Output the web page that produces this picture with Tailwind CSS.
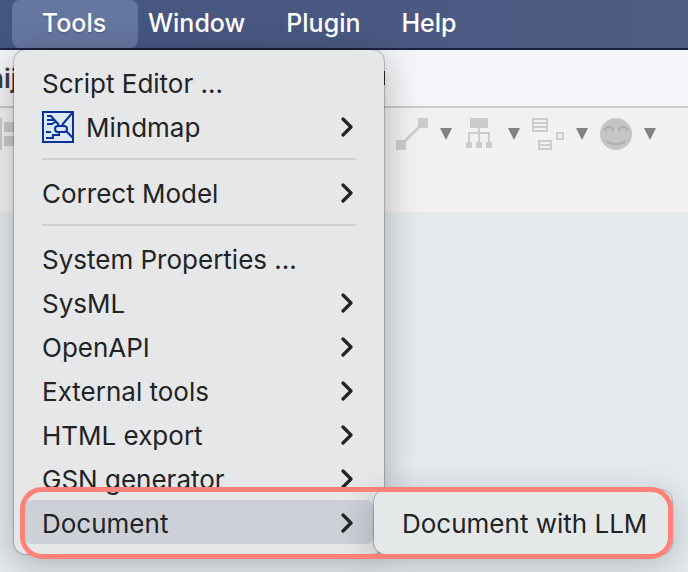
<!DOCTYPE html>
<html lang="en">
<head>
<meta charset="utf-8">
<title>Tools menu</title>
<script src="https://cdn.jsdelivr.net/npm/@tailwindcss/browser@4"></script>
</head>
<body class="relative flex min-h-screen flex-col overflow-hidden bg-[#e5eaee] font-['Inter','Liberation_Sans',sans-serif] text-[26px] text-[#222325]">
<svg class="hidden">
  <symbol id="chevron" viewBox="0 0 12 20"><path d="M2 2l8 8-8 8" fill="none" stroke="#222325" stroke-width="3.2" stroke-linecap="round" stroke-linejoin="round"/></symbol>
  <symbol id="drop" viewBox="0 0 12 12"><path d="M0 0h12L6 12z" fill="#7f8281"/></symbol>
</svg>

<nav aria-label="Menu bar" class="flex h-[50px] items-start border-b-2 border-[#1c2340] bg-linear-to-r from-[#445580] to-[#4e5c82] pl-3 text-[25px] font-medium text-white">
  <button class="h-12 w-[126px] rounded-lg bg-[#65769f] pr-0.5 text-shadow-sm">Tools</button>
  <div class="ml-2.5 flex h-12 gap-[41px] text-shadow-sm">
    <button>Window</button>
    <button>Plugin</button>
    <button>Help</button>
  </div>
</nav>

<header class="flex h-[58px] items-center justify-between overflow-hidden border-b-2 border-[#c8cacc] bg-[#f4f5f8]">
  <span class="-ml-3 font-semibold text-[#3c3c3c]">nij</span>
  <span class="mr-[303px] h-3.5 w-1 bg-[#333]"></span>
</header>

<div role="toolbar" aria-label="Diagram tools" class="flex h-[104px] items-start justify-between bg-[#f1f1f1] pt-2.5 pr-8">
  <button aria-label="Align"><svg class="h-8 w-4" viewBox="0 0 16 32" fill="#c9cccb"><path d="M0 0h2v32H0zM4 4h12v10H4zM4 18h12v10H4z"/></svg></button>
  <div class="flex gap-3">
    <button class="flex items-center gap-3" aria-label="Line">
      <svg class="size-8" viewBox="0 0 32 32" fill="#cacdcc"><path d="M5 27L27 5" stroke="#cacdcc" stroke-width="2.5"/><path d="M22 0h10v10H22zM0 22h10v10H0z"/></svg>
      <svg class="size-3"><use href="#drop"/></svg>
    </button>
    <button class="flex items-center gap-3" aria-label="Hierarchy">
      <svg class="size-8" viewBox="0 0 32 32" fill="#cacdcc"><path d="M6 0h18v10H6zM2 24h6v6H2zM12 24h6v6h-6zM22 24h6v6h-6z"/><path d="M15 10v14M5 24v-9h20v9" fill="none" stroke="#cacdcc" stroke-width="2"/></svg>
      <svg class="size-3"><use href="#drop"/></svg>
    </button>
    <button class="flex items-center gap-3" aria-label="Compartments">
      <svg class="size-8" viewBox="0 0 32 32" fill="none" stroke="#cacdcc" stroke-width="2"><path d="M1 1h14v12H1zM1 5h14M1 9h14M7 23h12v8H7zM7 27h12M25 15h6v6h-6z"/></svg>
      <svg class="size-3"><use href="#drop"/></svg>
    </button>
    <button class="flex items-center gap-3" aria-label="Icon">
      <svg class="size-8" viewBox="0 0 32 32"><circle cx="16" cy="16" r="16" fill="#c4c6c6"/><path d="M5 13q0-4 4-4t4 4M19 13q0-4 4-4t4 4M7 23q3 3 9 3t9-3" fill="none" stroke="#a9adac" stroke-width="2"/></svg>
      <svg class="size-3"><use href="#drop"/></svg>
    </button>
  </div>
</div>

<main class="flex-1"></main>

<div role="menu" aria-label="Tools" class="absolute top-[50px] left-3.5 w-[370px] rounded-xl bg-[#e6e7e9] py-2.5 shadow-[0_0_1px_1px_rgba(0,0,0,0.22),0_8px_36px_rgba(0,0,0,0.28)]">
  <button role="menuitem" class="flex h-11 w-full items-center px-7 pt-0.5">Script Editor ...</button>
  <button role="menuitem" class="flex h-11 w-full items-center justify-between pt-0.5 pr-[31px] pl-7">
    <span class="flex items-center gap-3"><svg class="size-8" viewBox="0 0 32 32" fill="none" stroke="#08329a" stroke-width="2"><path d="M1 1h30v30H1z" fill="#dce8fa"/><path d="M5 5h4l8 9M5 9h7M5 13h5l3-2M31 1L20 14M24 20l7 7M4 21h5M4 27h7v-3h6v-4"/><rect x="13" y="15" width="12" height="6" rx="3" fill="#dce8fa"/></svg>Mindmap</span><svg class="h-5 w-3"><use href="#chevron"/></svg>
  </button>
  <hr class="mx-7 my-2.5 border-t-2 border-[#cfd0d2]">
  <button role="menuitem" class="flex h-11 w-full items-center justify-between pt-0.5 pr-[31px] pl-7">Correct Model<svg class="h-5 w-3"><use href="#chevron"/></svg></button>
  <hr class="mx-7 my-2.5 border-t-2 border-[#cfd0d2]">
  <button role="menuitem" class="flex h-11 w-full items-center px-7 pt-0.5">System Properties ...</button>
  <button role="menuitem" class="flex h-11 w-full items-center justify-between pt-0.5 pr-[31px] pl-7">SysML<svg class="h-5 w-3"><use href="#chevron"/></svg></button>
  <button role="menuitem" class="flex h-11 w-full items-center justify-between pt-0.5 pr-[31px] pl-7">OpenAPI<svg class="h-5 w-3"><use href="#chevron"/></svg></button>
  <button role="menuitem" class="flex h-11 w-full items-center justify-between pt-0.5 pr-[31px] pl-7">External tools<svg class="h-5 w-3"><use href="#chevron"/></svg></button>
  <button role="menuitem" class="flex h-11 w-full items-center justify-between pt-0.5 pr-[31px] pl-7">HTML export<svg class="h-5 w-3"><use href="#chevron"/></svg></button>
  <button role="menuitem" class="flex h-11 w-full items-center justify-between pt-0.5 pr-[31px] pl-7">GSN generator<svg class="h-5 w-3"><use href="#chevron"/></svg></button>
  <div class="px-2.5">
    <button role="menuitem" aria-expanded="true" class="flex h-11 w-full items-center justify-between rounded-lg bg-[#cdd1d7] pt-0.5 pr-[21px] pl-[18px]">Document<svg class="h-5 w-3"><use href="#chevron"/></svg></button>
  </div>
</div>

<div role="menu" aria-label="Document" class="absolute top-[490px] left-[374px] w-[298px] rounded-xl bg-[#e5e8e9] py-2.5 shadow-[0_0_1px_1px_rgba(0,0,0,0.22),0_8px_36px_rgba(0,0,0,0.24)]">
  <button role="menuitem" class="flex h-11 w-full items-center px-7 pt-0.5 whitespace-nowrap">Document with LLM</button>
</div>

<div class="pointer-events-none absolute top-[487px] left-5 h-[72px] w-[653px] rounded-[22px] border-5 border-[#ff8279]"></div>
</body>
</html>
